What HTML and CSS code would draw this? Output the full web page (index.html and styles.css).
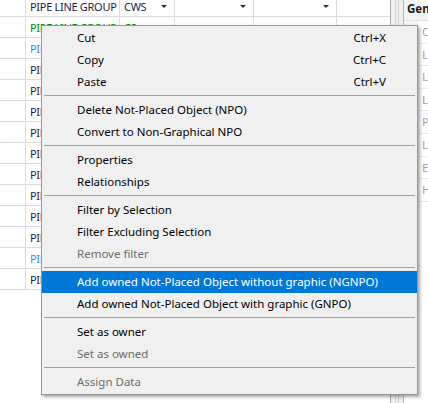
FILE: index.html
```html
<!DOCTYPE html>
<html>
<head>
<meta charset="utf-8">
<link rel="stylesheet" href="styles.css">
</head>
<body>
<div class="app">
  <div class="grid">
    <div class="row">
      <div class="c c0"></div>
      <div class="c c1">PIPE LINE GROUP</div>
      <div class="c c2">CWS<span class="arrow"></span></div>
      <div class="c c3"><span class="arrow"></span></div>
      <div class="c c4"><span class="arrow"></span></div>
      <div class="c c5"></div>
    </div>
    <div class="row green"><div class="c c0"></div><div class="c c1">PIPE LINE GROUP</div><div class="c c2">CS</div><div class="c c3"></div><div class="c c4"></div><div class="c c5"></div></div>
    <div class="row blue"><div class="c c0"></div><div class="c c1">PIPE LINE GROUP</div><div class="c c2"></div><div class="c c3"></div><div class="c c4"></div><div class="c c5"></div></div>
    <div class="row"><div class="c c0"></div><div class="c c1">PIPE LINE GROUP</div><div class="c c2"></div><div class="c c3"></div><div class="c c4"></div><div class="c c5"></div></div>
    <div class="row"><div class="c c0"></div><div class="c c1">PIPE LINE GROUP</div><div class="c c2"></div><div class="c c3"></div><div class="c c4"></div><div class="c c5"></div></div>
    <div class="row"><div class="c c0"></div><div class="c c1">PIPE LINE GROUP</div><div class="c c2"></div><div class="c c3"></div><div class="c c4"></div><div class="c c5"></div></div>
    <div class="row"><div class="c c0"></div><div class="c c1">PIPE LINE GROUP</div><div class="c c2"></div><div class="c c3"></div><div class="c c4"></div><div class="c c5"></div></div>
    <div class="row"><div class="c c0"></div><div class="c c1">PIPE LINE GROUP</div><div class="c c2"></div><div class="c c3"></div><div class="c c4"></div><div class="c c5"></div></div>
    <div class="row"><div class="c c0"></div><div class="c c1">PIPE LINE GROUP</div><div class="c c2"></div><div class="c c3"></div><div class="c c4"></div><div class="c c5"></div></div>
    <div class="row"><div class="c c0"></div><div class="c c1">PIPE LINE GROUP</div><div class="c c2"></div><div class="c c3"></div><div class="c c4"></div><div class="c c5"></div></div>
    <div class="row"><div class="c c0"></div><div class="c c1">PIPE LINE GROUP</div><div class="c c2"></div><div class="c c3"></div><div class="c c4"></div><div class="c c5"></div></div>
    <div class="row"><div class="c c0"></div><div class="c c1">PIPE LINE GROUP</div><div class="c c2"></div><div class="c c3"></div><div class="c c4"></div><div class="c c5"></div></div>
    <div class="row blue"><div class="c c0"></div><div class="c c1">PIPE LINE GROUP</div><div class="c c2"></div><div class="c c3"></div><div class="c c4"></div><div class="c c5"></div></div>
    <div class="row"><div class="c c0"></div><div class="c c1">PIPE LINE GROUP</div><div class="c c2"></div><div class="c c3"></div><div class="c c4"></div><div class="c c5"></div></div>
  </div>
  <div class="splitter"><div class="grip"></div></div>
  <div class="props">
    <div class="phead">General</div>
    <div class="prow"><span class="pind"></span><span class="plabel">Class</span></div>
    <div class="prow"><span class="pind"></span><span class="plabel">Line</span></div>
    <div class="prow"><span class="pind"></span><span class="plabel">Line</span></div>
    <div class="prow"><span class="pind"></span><span class="plabel">Line</span></div>
    <div class="prow"><span class="pind"></span><span class="plabel">Pipe</span></div>
    <div class="prow"><span class="pind"></span><span class="plabel">Line</span></div>
    <div class="prow"><span class="pind"></span><span class="plabel">End</span></div>
    <div class="prow"><span class="pind"></span><span class="plabel">Hold</span></div>
    <div class="pfill"></div>
  </div>
</div>

<div class="menu">
  <div class="item"><span>Cut</span><span class="key">Ctrl+X</span></div>
  <div class="item"><span>Copy</span><span class="key">Ctrl+C</span></div>
  <div class="item"><span>Paste</span><span class="key">Ctrl+V</span></div>
  <div class="sep"></div>
  <div class="item"><span>Delete Not-Placed Object (NPO)</span></div>
  <div class="item"><span>Convert to Non-Graphical NPO</span></div>
  <div class="sep"></div>
  <div class="item"><span>Properties</span></div>
  <div class="item"><span>Relationships</span></div>
  <div class="sep"></div>
  <div class="item"><span>Filter by Selection</span></div>
  <div class="item"><span>Filter Excluding Selection</span></div>
  <div class="item disabled"><span>Remove filter</span></div>
  <div class="sep"></div>
  <div class="item active"><span>Add owned Not-Placed Object without graphic (NGNPO)</span></div>
  <div class="item"><span>Add owned Not-Placed Object with graphic (GNPO)</span></div>
  <div class="sep"></div>
  <div class="item"><span>Set as owner</span></div>
  <div class="item disabled"><span>Set as owned</span></div>
  <div class="sep"></div>
  <div class="item disabled"><span>Assign Data</span></div>
</div>
</body>
</html>
```

FILE: styles.css
```css
* { box-sizing: border-box; }
html, body {
  margin: 0;
  padding: 0;
  width: 428px;
  height: 403px;
  overflow: hidden;
  background: #ffffff;
  font-family: "Noto Sans", "Open Sans", sans-serif;
  font-size: 11.5px;
}
.app {
  display: flex;
  height: 403px;
}
.grid {
  width: 390px;
  flex: none;
  margin-top: -4px;
  color: #1c1c4e;
  font-size: 11px;
  letter-spacing: -0.3px;
}
.row {
  display: flex;
  height: 21px;
  border-bottom: 1px solid #dcdcdc;
}
.row.green { color: #008a00; }
.row.blue { color: #1e8fff; }
.c {
  height: 20px;
  line-height: 21px;
  padding-left: 4px;
  border-right: 1px solid #dcdcdc;
  white-space: nowrap;
  overflow: hidden;
  position: relative;
}
.c0 { width: 26px; }
.c1 { width: 94px; }
.c2 { width: 55px; }
.c3 { width: 79px; }
.c4 { width: 83px; }
.c5 { flex: 1; border-right: none; }
.arrow {
  position: absolute;
  right: 7px;
  top: 9px;
  width: 0;
  height: 0;
  border-left: 3px solid transparent;
  border-right: 3px solid transparent;
  border-top: 3px solid #333;
}
.splitter {
  width: 14px;
  flex: none;
  background: #f0f0f0;
  border-left: 1px solid #a8a8a8;
  border-right: 1px solid #b8b8b8;
  display: flex;
  justify-content: center;
}
.grip {
  width: 4px;
  border-left: 1px solid #d0d0d8;
  border-right: 1px solid #d0d0d8;
}
.props {
  flex: 1;
  display: flex;
  flex-direction: column;
  overflow: hidden;
  background: #ffffff;
}
.phead {
  height: 21px;
  line-height: 18px;
  padding-left: 3px;
  font-weight: bold;
  color: #1a1a1a;
  background: #f4f4f4;
  border-bottom: 1px solid #e2e2e2;
  white-space: nowrap;
}
.prow {
  display: flex;
  height: 22.6px;
  border-bottom: 1px solid #ececec;
  white-space: nowrap;
}
.pind {
  width: 14px;
  flex: none;
  background: #f4f4f4;
}
.plabel {
  padding-left: 4px;
  line-height: 21px;
  color: #a2a2b0;
}
.pfill {
  flex: 1;
  display: flex;
}
.menu {
  position: absolute;
  left: 41px;
  top: 25px;
  width: 377px;
  height: 370px;
  background: #f0f0f0;
  border: 1px solid #979797;
  padding: 1px 0;
  box-shadow: 2px 2px 3px rgba(0, 0, 0, 0.35);
  color: #000000;
}
.item {
  height: 22px;
  line-height: 22px;
  display: flex;
  justify-content: space-between;
  padding-left: 35px;
  padding-right: 31px;
  white-space: nowrap;
}
.item.active {
  background: #0078d7;
  color: #ffffff;
}
.item.disabled { color: #6d6d6d; }
.sep {
  height: 6px;
  padding-top: 2px;
  margin: 0 2px;
}
.sep::after {
  content: "";
  display: block;
  height: 1px;
  background: #a0a0a0;
}
```
